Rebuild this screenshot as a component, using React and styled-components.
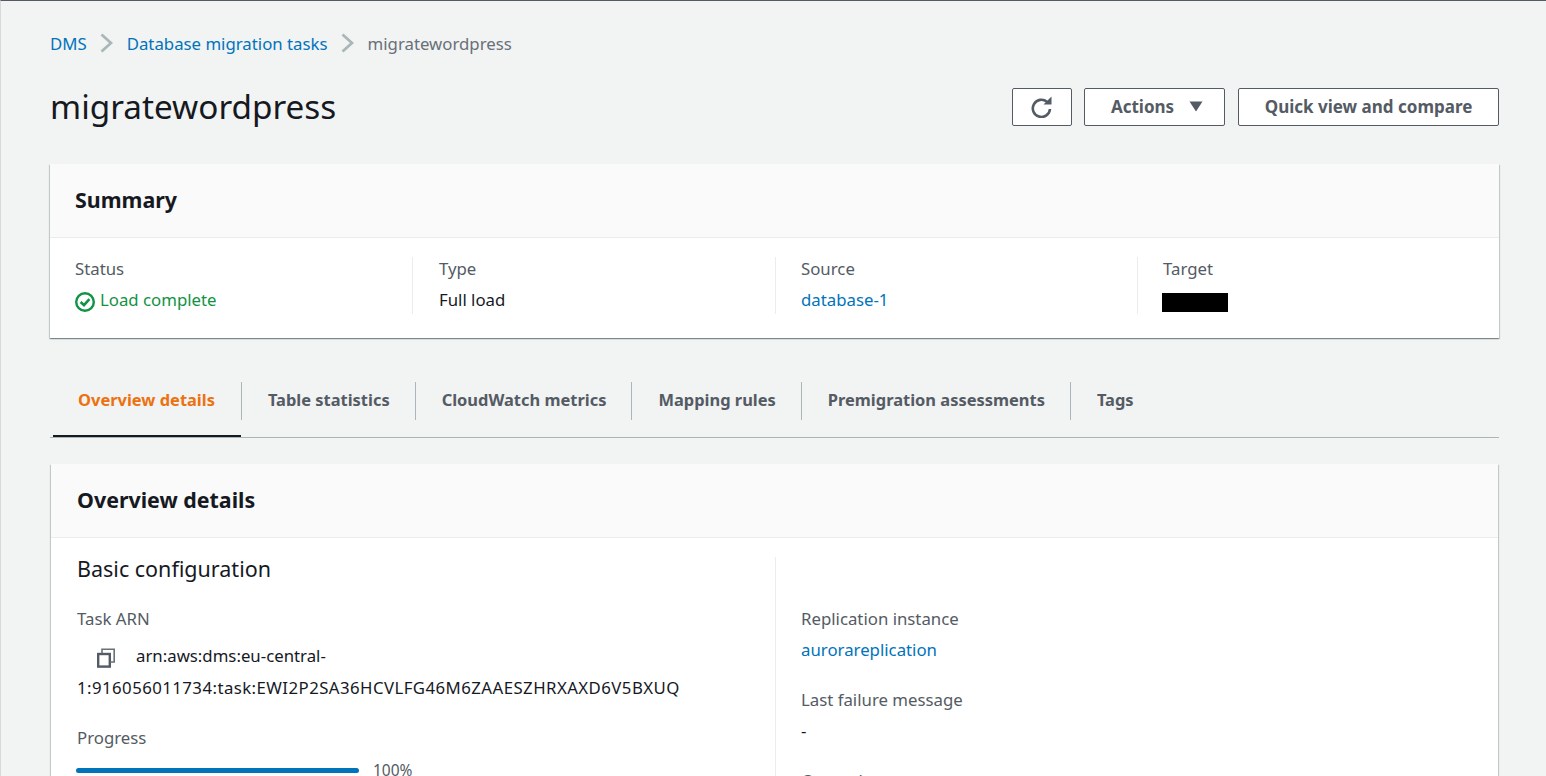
import React from 'react';
import styled, { createGlobalStyle } from 'styled-components';

const GlobalStyle = createGlobalStyle`
    html, body {
        margin: 0;
        height: 100%;
        overflow: hidden;
    }
    body {
        background: #f2f3f3;
        font-family: "Noto Sans", "Open Sans", sans-serif;
        font-size: 16.8px;
        color: #16191f;
    }
`;

const TABS = [
    'Overview details',
    'Table statistics',
    'CloudWatch metrics',
    'Mapping rules',
    'Premigration assessments',
    'Tags',
];

function ChevronIcon() {
    return (
        <svg width="13" height="20" viewBox="0 0 13 20" fill="none">
            <path d="M1.5 1.5 L11 10 L1.5 18.5" stroke="#aab7b8" strokeWidth="2.8" />
        </svg>
    );
}

function RefreshIcon() {
    return (
        <svg width="21" height="22" viewBox="0 0 21 22" fill="none">
            <path
                d="M16 5.8 A8.6 8.6 0 1 0 19 13"
                stroke="#545b64"
                strokeWidth="2.6"
            />
            <path d="M20.5 0.5 V8.5 H12.5 Z" fill="#545b64" />
        </svg>
    );
}

function CaretIcon() {
    return (
        <svg width="14" height="11" viewBox="0 0 14 11">
            <path d="M0.5 0.5 H13.5 L7 10.5 Z" fill="#545b64" />
        </svg>
    );
}

function CopyIcon() {
    return (
        <svg width="18" height="20" viewBox="0 0 18 20" fill="none">
            <rect x="1.2" y="6" width="11.6" height="12.6" stroke="#545b64" strokeWidth="2.4" />
            <path d="M5 5 V1.2 H17.2 V14 H13.5" stroke="#687078" strokeWidth="1.6" />
        </svg>
    );
}

function App() {
    return (
        <Page>
            <GlobalStyle />
            <Breadcrumbs>
                <Crumb href="#">DMS</Crumb>
                <ChevronIcon />
                <Crumb href="#">Database migration tasks</Crumb>
                <ChevronIcon />
                <Current>migratewordpress</Current>
            </Breadcrumbs>

            <TitleRow>
                <Title>migratewordpress</Title>
                <Actions>
                    <IconButton>
                        <RefreshIcon />
                    </IconButton>
                    <ActionsButton>
                        Actions
                        <CaretIcon />
                    </ActionsButton>
                    <CompareButton>Quick view and compare</CompareButton>
                </Actions>
            </TitleRow>

            <SummaryCard>
                <CardHeader>
                    <CardTitle>Summary</CardTitle>
                </CardHeader>
                <SummaryGrid>
                    <SummaryCell>
                        <Label>Status</Label>
                        <StatusValue>
                            <StatusSvg width="20" height="20" viewBox="0 0 20 20" fill="none">
                                <circle cx="10" cy="10" r="8.8" stroke="#0f9443" strokeWidth="2.4" />
                                <path d="M5.6 10 L9 13.2 L14.4 7.2" stroke="#0f9443" strokeWidth="2.6" />
                            </StatusSvg>
                            Load complete
                        </StatusValue>
                    </SummaryCell>
                    <SummaryCell $inset={26}>
                        <Label>Type</Label>
                        <Value>Full load</Value>
                    </SummaryCell>
                    <SummaryCell>
                        <Label>Source</Label>
                        <Value>
                            <Crumb href="#">database-1</Crumb>
                        </Value>
                    </SummaryCell>
                    <SummaryCell>
                        <Label>Target</Label>
                        <Redacted />
                    </SummaryCell>
                </SummaryGrid>
            </SummaryCard>

            <TabBar>
                {TABS.map((tab, index) => (
                    <Tab key={tab} $active={index === 0}>
                        {tab}
                    </Tab>
                ))}
            </TabBar>

            <DetailsCard>
                <DetailsHeader>
                    <CardTitle>Overview details</CardTitle>
                </DetailsHeader>
                <DetailsGrid>
                    <DetailsColumn>
                        <SectionTitle>Basic configuration</SectionTitle>
                        <Label>Task ARN</Label>
                        <ArnValue>
                            <CopyWrap>
                                <CopyIcon />
                            </CopyWrap>
                            arn:aws:dms:eu-central-
                            <ArnTail>
                                1:916056011734:task:EWI2P2SA36HCVLFG46M6ZAAESZHRXAXD6V5BXUQ
                            </ArnTail>
                        </ArnValue>
                        <ProgressLabel>Progress</ProgressLabel>
                        <ProgressRow>
                            <ProgressTrack>
                                <ProgressFill />
                            </ProgressTrack>
                            <ProgressText>100%</ProgressText>
                        </ProgressRow>
                    </DetailsColumn>
                    <RightColumn>
                        <Label>Replication instance</Label>
                        <Value>
                            <Crumb href="#">aurorareplication</Crumb>
                        </Value>
                        <SpacedLabel>Last failure message</SpacedLabel>
                        <Value>-</Value>
                        <SpacedLabel>Created</SpacedLabel>
                    </RightColumn>
                </DetailsGrid>
            </DetailsCard>
        </Page>
    );
}

export default App;

const Page = styled.div`
    height: 776px;
    box-sizing: border-box;
    overflow: hidden;
    padding: 0 47px 0 49px;
    border-top: 1px solid #545b64;
    border-left: 1px solid #d5dbdb;
`;

const Breadcrumbs = styled.nav`
    display: flex;
    align-items: center;
    gap: 13.5px;
    height: 24px;
    margin-top: 30px;
`;

const Crumb = styled.a`
    color: #0073bb;
    text-decoration: none;
`;

const Current = styled.span`
    color: #687078;
`;

const TitleRow = styled.div`
    display: flex;
    align-items: center;
    justify-content: space-between;
    height: 40px;
    margin-top: 32px;
`;

const Title = styled.h1`
    margin: 0 0 2px;
    font-size: 33.3px;
    font-weight: 400;
    color: #16191f;
`;

const Actions = styled.div`
    display: flex;
    gap: 12px;
`;

const Button = styled.button`
    display: flex;
    align-items: center;
    justify-content: center;
    box-sizing: border-box;
    height: 38px;
    padding: 0 0 2px;
    background: #fff;
    border: 1px solid #545b64;
    border-radius: 2px;
    color: #545b64;
    font-family: inherit;
    font-size: 17px;
    font-weight: 700;
`;

const IconButton = styled(Button)`
    width: 60px;
    padding: 0 2px 0 0;
`;

const ActionsButton = styled(Button)`
    width: 141px;
    gap: 15px;
    padding-left: 5px;
`;

const CompareButton = styled(Button)`
    width: 261px;
    margin-left: 1px;
`;

const Card = styled.section`
    background: #fff;
    box-shadow: 0 1px 1px 0 rgba(0, 28, 36, 0.3), 1px 1px 1px 0 rgba(0, 28, 36, 0.15),
        -1px 1px 1px 0 rgba(0, 28, 36, 0.15);
`;

const SummaryCard = styled(Card)`
    margin-top: 37px;
    height: 174px;
`;

const CardHeader = styled.header`
    display: flex;
    align-items: center;
    box-sizing: border-box;
    height: 74px;
    padding: 0 25px 2px;
    background: #fafafa;
    border-bottom: 1px solid #eaeded;
`;

const DetailsHeader = styled(CardHeader)`
    padding-left: 26px;
`;

const CardTitle = styled.h2`
    margin: 0;
    font-size: 21.4px;
    font-weight: 700;
    color: #16191f;
`;

const SummaryGrid = styled.div`
    display: grid;
    grid-template-columns: 362px 363px 362px 1fr;
    padding: 19px 0 0;
`;

const SummaryCell = styled.div`
    height: 57px;
    padding-left: ${(props) => props.$inset || 25}px;
    & + & {
        border-left: 1px solid #eaeded;
    }
`;

const Label = styled.div`
    height: 24px;
    line-height: 24px;
    color: #545b64;
`;

const Value = styled.div`
    margin-top: 7px;
    height: 24px;
    line-height: 24px;
    color: #16191f;
`;

const StatusValue = styled(Value)`
    display: flex;
    align-items: center;
    gap: 5px;
    color: #12933f;
`;

const StatusSvg = styled.svg`
    margin-top: 4px;
`;

const Redacted = styled.div`
    width: 66px;
    height: 19px;
    margin: 12px 0 0 -1px;
    background: #000;
`;

const TabBar = styled.div`
    display: flex;
    align-items: flex-start;
    margin-top: 37px;
    height: 63px;
    padding-left: 3px;
    box-sizing: border-box;
    border-bottom: 1px solid #aab7b8;
`;

const Tab = styled.div`
    position: relative;
    box-sizing: border-box;
    height: 62px;
    padding: 6px 25px 0 27px;
    line-height: 38px;
    font-size: 16.45px;
    font-weight: 700;
    color: ${(props) => (props.$active ? '#ec7211' : '#545b64')};
    border-bottom: ${(props) => (props.$active ? '2px solid #16191f' : 'none')};

    &:first-child {
        padding: 6px 26px 0 25px;
    }

    &:not(:last-child)::after {
        content: '';
        position: absolute;
        top: 7px;
        right: -1px;
        height: 38px;
        border-right: 1px solid #aab7b8;
    }
`;

const DetailsCard = styled(Card)`
    margin: 26px 1px 0;
    height: 400px;
`;

const DetailsGrid = styled.div`
    display: grid;
    grid-template-columns: 724px 1fr;
    padding-top: 19px;
`;

const DetailsColumn = styled.div`
    padding: 0 26px;
    min-width: 0;
`;

const RightColumn = styled.div`
    border-left: 1px solid #eaeded;
    padding: 50px 25px 0;
`;

const SectionTitle = styled.h3`
    margin: 0 0 26px;
    height: 24px;
    line-height: 24px;
    font-size: 21.5px;
    font-weight: 400;
    color: #16191f;
`;

const ArnValue = styled.div`
    margin-top: 9px;
    line-height: 32px;
    color: #16191f;
`;

const ArnTail = styled.span`
    display: block;
    letter-spacing: 0.44px;
`;

const CopyWrap = styled.span`
    display: inline-block;
    height: 20px;
    line-height: 0;
    vertical-align: -6px;
    margin: 0 21px 0 20px;
`;

const ProgressLabel = styled(Label)`
    margin-top: 22px;
`;

const SpacedLabel = styled(Label)`
    margin-top: 26px;
`;

const ProgressRow = styled.div`
    display: flex;
    align-items: center;
    gap: 14px;
    margin: 9px 0 0 -1px;
`;

const ProgressTrack = styled.div`
    width: 283px;
    height: 5px;
    background: #eaeded;
    border-radius: 3px;
    overflow: hidden;
`;

const ProgressFill = styled.div`
    width: 100%;
    height: 100%;
    background: #0073bb;
`;

const ProgressText = styled.span`
    font-size: 15.5px;
    color: #545b64;
`;
